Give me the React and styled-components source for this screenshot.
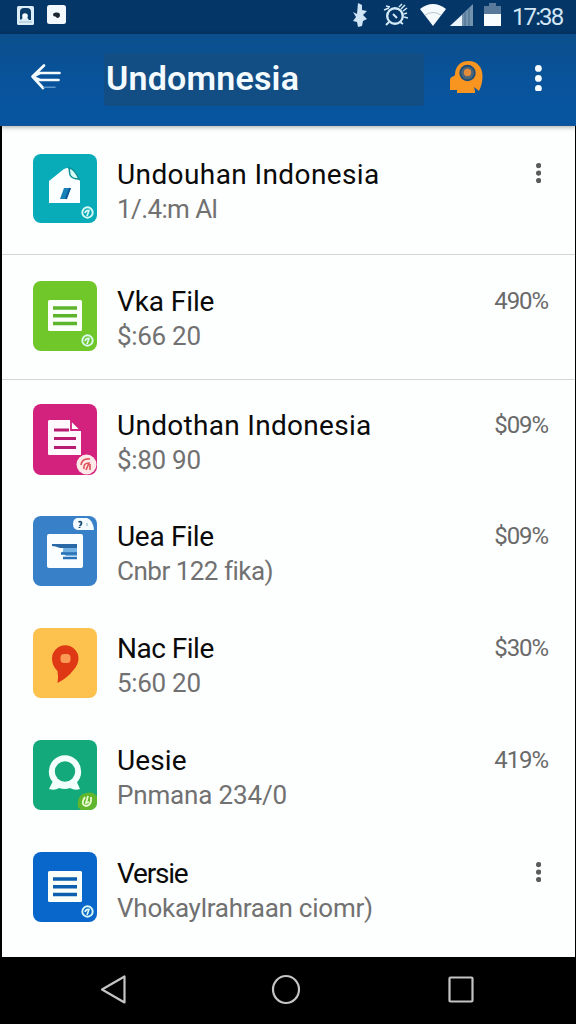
import React from 'react';
import styled, { createGlobalStyle } from 'styled-components';

const GlobalStyle = createGlobalStyle`
  * {
    box-sizing: border-box;
  }

  body {
    margin: 0;
    background: #000;
    font-family: Roboto, 'Liberation Sans', sans-serif;
  }

  svg {
    display: block;
    flex: none;
  }
`;

const FILES = [
  {
    title: 'Undouhan Indonesia',
    titleTrack: 0.4,
    meta: '1/.4:m Al',
    metaTrack: -0.6,
    color: '#08acb9',
    icon: 'house',
    badge: 'ring',
    height: 129,
    offset: 28,
    tile: 69,
    divider: '#d3d6d7',
  },
  {
    title: 'Vka File',
    titleTrack: -0.1,
    meta: '$:66 20',
    metaTrack: -0.3,
    amount: '490%',
    color: '#6fc72a',
    icon: 'lines',
    lineColor: '#5cb52b',
    badge: 'ring',
    height: 125,
    offset: 26,
    divider: '#d3d6d7',
  },
  {
    title: 'Undothan Indonesia',
    titleTrack: 0.3,
    meta: '$:80 90',
    metaTrack: -0.3,
    amount: '$09%',
    color: '#d3217e',
    icon: 'document',
    badge: 'pink',
    height: 136,
    offset: 24,
    tile: 71,
    drop: 1,
  },
  {
    title: 'Uea File',
    titleTrack: -0.3,
    meta: 'Cnbr 122 fika)',
    metaTrack: -0.5,
    amount: '$09%',
    color: '#3880c8',
    icon: 'window',
    badge: 'cloud',
  },
  {
    title: 'Nac File',
    titleTrack: -0.5,
    meta: '5:60 20',
    metaTrack: -0.3,
    amount: '$30%',
    color: '#fcc24d',
    icon: 'pin',
  },
  {
    title: 'Uesie',
    titleTrack: 0.1,
    meta: 'Pnmana 234/0',
    metaTrack: -0.15,
    amount: '419%',
    color: '#13a97b',
    icon: 'bubble',
    badge: 'green',
  },
  {
    title: 'Versie',
    titleTrack: -1.2,
    meta: 'Vhokaylrahraan ciomr)',
    metaTrack: -0.25,
    color: '#0967cb',
    icon: 'lines',
    lineColor: '#0b5fae',
    badge: 'ring',
    drop: 1,
  },
];

const Screen = styled.div`
  display: flex;
  flex-direction: column;
  width: 576px;
  height: 1024px;
  overflow: hidden;
`;

const StatusBar = styled.div`
  display: flex;
  flex: none;
  align-items: flex-start;
  height: 34px;
  padding: 3px 12px 0 17px;
  background: #043668;
`;

const StatusGroup = styled.div`
  display: flex;
  align-items: flex-start;
  gap: ${(props) => props.$gap}px;
`;

const StatusIcons = styled(StatusGroup)`
  margin-left: auto;
`;

const Clock = styled.div`
  width: 52px;
  margin-left: 11px;
  font-size: 24px;
  font-weight: 400;
  line-height: 28px;
  letter-spacing: -1.9px;
  white-space: nowrap;
  color: #d3e6f4;
`;

const AppBar = styled.header`
  position: relative;
  z-index: 1;
  display: flex;
  flex: none;
  align-items: center;
  height: 92px;
  padding: 0 34px 3px 30px;
  background: linear-gradient(#0b4f8c, #08539b 50%, #0755a0);
  border-bottom: 1px solid #17548e;
  box-shadow: 0 1px 5px rgba(0, 0, 0, 0.35);
`;

const SearchField = styled.div`
  width: 320px;
  height: 53px;
  margin: 2px 25px 0 42px;
  padding-left: 2px;
  border-radius: 3px;
  background: #124d83;
`;

const PageTitle = styled.h1`
  margin: 0;
  font-size: 34px;
  font-weight: 600;
  line-height: 50px;
  letter-spacing: 0.2px;
  white-space: nowrap;
  color: #f4fbff;
`;

const AppBarMenu = styled.div`
  margin-left: auto;
`;

const List = styled.main`
  flex: 1;
  min-height: 0;
  overflow: hidden;
  border: solid #000;
  border-width: 0 1px 0 2px;
  background: #fdfefe;
`;

const Row = styled.div`
  display: flex;
  align-items: flex-start;
  height: ${(props) => props.$height || 112}px;
  padding: ${(props) => props.$offset ?? 0}px 27px 0 31px;
  border-bottom: ${(props) => (props.$divider ? `1px solid ${props.$divider}` : '0')};
`;

const Tile = styled.div`
  position: relative;
  flex: none;
  width: 64px;
  height: ${(props) => props.$height || 70}px;
  border-radius: 8px;
  background: ${(props) => props.$color};
`;

const Badge = styled.svg`
  position: absolute;
  right: 0;
  ${(props) => (props.$top ? 'top: 0;' : 'bottom: 0;')}
`;

const Labels = styled.div`
  flex: 1;
  padding: ${(props) => 4 + props.$drop}px 0 0 20px;
  white-space: nowrap;
`;

const Title = styled.div`
  font-size: 28px;
  line-height: 34px;
  letter-spacing: ${(props) => props.$track}px;
  color: #0a0a0a;
`;

const Meta = styled.div`
  font-size: 26px;
  line-height: 34px;
  letter-spacing: ${(props) => props.$track}px;
  color: #717171;
`;

const Amount = styled.div`
  padding-top: ${(props) => 3 + props.$drop}px;
  font-size: 24px;
  line-height: 34px;
  letter-spacing: -1.1px;
  color: #6a6a6a;
`;

const RowMenu = styled.div`
  padding: ${(props) => 9 + props.$drop}px 7px 0 0;
`;

const NavBar = styled.nav`
  display: flex;
  flex: none;
  justify-content: space-between;
  height: 67px;
  padding: 16px 101px 0 100px;
  background: #000;
`;

const Dots = ({ r, step, color }) => {
  const width = r * 2;
  return (
    <svg width={width} height={step * 2 + width} fill={color}>
      <circle cx={r} cy={r} r={r} />
      <circle cx={r} cy={r + step} r={r} />
      <circle cx={r} cy={r + step * 2} r={r} />
    </svg>
  );
};

const NotificationIcons = () => (
  <StatusGroup $gap={13}>
    <svg width="17" height="23" viewBox="0 0 17 23">
      <rect y="3" width="17" height="19" rx="1.5" fill="#dcedf7" />
      <path d="M3 16V9q0-4 4-4h3q4 0 4 4v8h-2l-3-4-3 1-2 3z" fill="#0b3d68" />
      <circle cx="8" cy="13" r="2.8" fill="#f3fbff" />
      <path d="M2 19h13" stroke="#a5bdcc" />
    </svg>
    <svg width="19" height="23" viewBox="0 0 19 23">
      <rect y="2" width="19" height="19" rx="2.5" fill="#f3f8fc" />
      <path d="M6 11q1-2 4-1.500 3 0 3 2.500t-2 3q-2-.5-2.500-1.500Q6 14 6 11z" fill="#1b2530" />
    </svg>
  </StatusGroup>
);

const BluetoothIcon = () => (
  <svg width="16" height="24" viewBox="0 0 16 24" fill="#cfe4f4">
    <path d="M6 0l4 2v5l5 1-4 4 4 4-4 2-1 5-4 1-1-5-4-1 3-4-3-5 4 2z" />
  </svg>
);

const AlarmIcon = () => (
  <svg width="26" height="24" viewBox="0 0 26 24" fill="none" stroke="#d2e9f5">
    <circle cx="12" cy="13" r="7.800" strokeWidth="2.400" />
    <path d="M10 11l4 4M6 19l-3 3M17 19l3 2" strokeWidth="2" />
    <path d="M1 7l5-2M3 3l4 1M16 4l3-3M18 6l4-4M20 8l4-3M21 11l3-1M21 14l4 1" strokeWidth="1.500" />
  </svg>
);

const WifiIcon = () => (
  <svg width="26" height="24" viewBox="0 0 26 24">
    <path d="M0 6Q13-4 26 6L13 23z" fill="#f5fafc" />
    <path d="M5 12q8-5 16 0" fill="none" stroke="#b9c7d1" strokeWidth="1" />
  </svg>
);

const SignalIcon = () => (
  <svg width="23" height="24" viewBox="0 0 23 24">
    <path d="M23 1v22H0z" fill="#7292ae" />
    <path d="M12 12v11H0z" fill="#eaf4fa" />
    <path d="M15 9v14M19 5v18" stroke="#496f91" />
  </svg>
);

const BatteryIcon = () => (
  <svg width="17" height="24" viewBox="0 0 17 24">
    <path d="M5 0h7v3h5v9H0V3h5z" fill="#58799a" />
    <path d="M0 11h17v12H0z" fill="#fafdff" />
  </svg>
);

const BackIcon = () => (
  <svg width="32" height="31" viewBox="0 0 32 31" fill="none" strokeLinecap="round" strokeLinejoin="round">
    <path d="M14 2.500L2.500 13.500 13 25M3 13.500L10 10h19.500M3 14L10 17h18.500" stroke="#f3fbff" strokeWidth="2.700" />
    <path d="M14 24.300h11" stroke="#5b96ca" strokeWidth="1.600" />
  </svg>
);

const AccountIcon = () => (
  <svg width="34" height="36" viewBox="0 0 34 36">
    <path
      d="M6 15C6 7 11 1 19.500 1S33.500 7 33.500 16q0 8-3.500 15l-5-4 1 4v2H8v-3H1V20q0-3 4-4z"
      fill="#f79520"
    />
    <circle cx="18.500" cy="13" r="8.200" fill="#1f4e7b" />
    <circle cx="18.500" cy="13" r="6.300" fill="#4d6678" />
    <circle cx="18.500" cy="12.500" r="3.700" fill="#e28b3a" />
  </svg>
);

const TileIcon = ({ name, lineColor }) => (
  <svg width="64" height="70" viewBox="0 0 64 70">
    {name === 'house' && (
      <>
        <path d="M16 27L31 15q2-1 4-1l12 13v22H16z" fill="#fbffff" />
        <path d="M36 14q5 0 10 11-7 0-9-4z" fill="#d9fbf5" stroke="#0b9096" strokeWidth="1.500" />
        <path d="M31 34h7l-5 11h-6z" fill="#1782b7" />
        <path d="M37 34l-4 11" stroke="#0d5799" strokeWidth="2" />
      </>
    )}
    {name === 'lines' && (
      <>
        <rect x="15" y="19" width="34" height="31" rx="1.500" fill="#fafff9" />
        <path d="M20 27h24M20 34.800h24M20 42.500h24" stroke={lineColor} strokeWidth="3.500" />
      </>
    )}
    {name === 'document' && (
      <>
        <path d="M16 16h21l11 10v25H16q-1 0-1-1V17z" fill="#fff8fd" />
        <path d="M38 16l10 10H38z" fill="#fff" stroke="#d3217e" strokeWidth="1.800" />
        <path d="M21 26h15M21 34.500h22M21 43.500h22" stroke="#b71c72" strokeWidth="3" />
      </>
    )}
    {name === 'window' && (
      <>
        <rect x="14" y="18" width="36" height="34" rx="2" fill="#fbfeff" />
        <path d="M19 28h25v4H27q-5-2-8-2z" fill="#2a69a8" />
        <path d="M30 32h14v8H33q-1-2-5-3 3-1 2-5z" fill="#73b2e3" />
        <path d="M28 37.500h16M30 42h14" stroke="#2a70b6" strokeWidth="2.500" />
      </>
    )}
    {name === 'pin' && (
      <>
        <path d="M24.500 55q1-7 0-12-5.500-5-5.500-12.500a13 13 0 0 1 26.500 0q0 6-5 11.500-6 8-16 13z" fill="#df3815" />
        <rect x="27.500" y="26" width="10" height="9" rx="3.500" fill="#fa9a55" />
      </>
    )}
    {name === 'bubble' && (
      <>
        <circle cx="32" cy="31.500" r="13.200" fill="none" stroke="#f2fffb" strokeWidth="6" />
        <path d="M21 39l-5 10q6 2 10-1 6 2 11 0 5 3 10 1l-4-9q-10 8-22-1z" fill="#f2fffb" />
      </>
    )}
  </svg>
);

const TileBadge = ({ type, color }) => {
  if (type === 'cloud') {
    return (
      <Badge $top width="26" height="17" viewBox="0 0 26 17">
        <path d="M6 2h10q6 2 7 12H8q-6 0-6-6 0-5 4-6z" fill="#f5fcff" />
        <path d="M7.500 6q3-1 3 1T8.500 10M8.500 11v1" fill="none" stroke="#17496f" strokeWidth="1.800" />
        <path d="M16 7v3" stroke="#a9c9df" strokeWidth="1.500" />
      </Badge>
    );
  }
  if (type === 'pink') {
    return (
      <Badge width="21" height="21" viewBox="0 0 21 21">
        <circle cx="10.500" cy="10.500" r="10" fill="#ffe9e8" />
        <path d="M5 11q1-7 9-6M8 15q-1-6 5-6l-3 7M14 10v6" fill="none" stroke="#df5661" strokeWidth="1.700" />
      </Badge>
    );
  }
  if (type === 'green') {
    return (
      <Badge width="20" height="20" viewBox="0 0 20 20">
        <path d="M1 17Q-1 5 9 3q8-2 11 4v5q0 8-8 8H4z" fill="#62b62d" />
        <path d="M8 7q-5 8 1 9 6-1 5-9M11 6l-2 7 3-1" fill="none" stroke="#e9fbcf" strokeWidth="1.800" />
      </Badge>
    );
  }
  return (
    <Badge width="20" height="20" viewBox="0 0 20 20">
      <circle cx="10.500" cy="9.500" r="5.200" fill={color} stroke="#d9f9f4" strokeWidth="1.900" />
      <path d="M8 10q1-3 4-2.500L10 13" fill="none" stroke="#d9f9f4" strokeWidth="1.700" />
    </Badge>
  );
};

const FileRow = ({ file }) => {
  const drop = file.drop || 0;
  return (
    <Row $height={file.height} $offset={file.offset} $divider={file.divider}>
      <Tile $color={file.color} $height={file.tile}>
        <TileIcon name={file.icon} lineColor={file.lineColor} />
        {file.badge && <TileBadge type={file.badge} color={file.color} />}
      </Tile>
      <Labels $drop={drop}>
        <Title $track={file.titleTrack}>{file.title}</Title>
        <Meta $track={file.metaTrack}>{file.meta}</Meta>
      </Labels>
      {file.amount ? (
        <Amount $drop={drop}>{file.amount}</Amount>
      ) : (
        <RowMenu $drop={drop}>
          <Dots r={2.6} step={7.5} color="#5b5b5b" />
        </RowMenu>
      )}
    </Row>
  );
};

export default function App() {
  return (
    <Screen>
      <GlobalStyle />
      <StatusBar>
        <NotificationIcons />
        <StatusIcons $gap={11}>
          <StatusGroup $gap={15}>
            <BluetoothIcon />
            <AlarmIcon />
          </StatusGroup>
          <StatusGroup $gap={4}>
            <WifiIcon />
            <SignalIcon />
          </StatusGroup>
          <BatteryIcon />
        </StatusIcons>
        <Clock>17:38</Clock>
      </StatusBar>
      <AppBar>
        <BackIcon />
        <SearchField>
          <PageTitle>Undomnesia</PageTitle>
        </SearchField>
        <AccountIcon />
        <AppBarMenu>
          <Dots r={3.4} step={10} color="#f6fbff" />
        </AppBarMenu>
      </AppBar>
      <List>
        {FILES.map((file, idx) => (
          <FileRow key={`file${idx}`} file={file} />
        ))}
      </List>
      <NavBar>
        <svg width="28" height="34" viewBox="0 0 28 34" fill="none" stroke="#c4c4c4" strokeWidth="2.200">
          <path d="M2 16.500L24.500 3.500v26z" strokeLinejoin="round" />
        </svg>
        <svg width="33" height="34" viewBox="0 0 33 34" fill="none" stroke="#c4c4c4" strokeWidth="2.200">
          <ellipse cx="15" cy="16.500" rx="13" ry="13.500" />
        </svg>
        <svg width="28" height="34" viewBox="0 0 28 34" fill="none" stroke="#c4c4c4" strokeWidth="2.200">
          <rect x="2.500" y="4.500" width="23" height="24" rx="1" />
        </svg>
      </NavBar>
    </Screen>
  );
}
